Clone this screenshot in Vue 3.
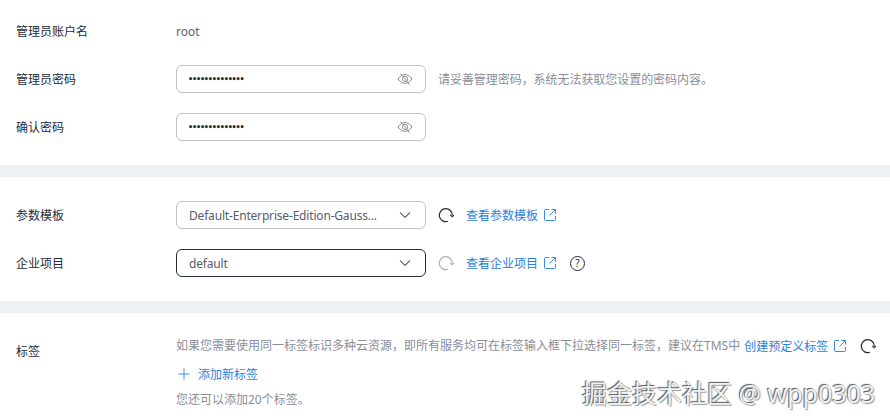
<script setup>
const pw = '•'.repeat(14)
</script>

<template>
  <div class="page">
    <section class="sec first">
      <div class="row">
        <div class="label">管理员账户名</div>
        <div class="val">root</div>
      </div>
      <div class="row">
        <div class="label">管理员密码</div>
        <div class="box">
          <span class="dots">{{ pw }}</span>
          <svg class="eye" width="16" height="16" viewBox="0 0 16 16" fill="none" stroke="#8f9196" stroke-width="1">
            <path d="M1 8c1.8-3 4.2-4.300 7-4.300S13.200 5 15 8c-1.800 3-4.200 4.300-7 4.300S2.800 11 1 8z" />
            <circle cx="8" cy="8" r="2.600" />
            <path d="M3.500 2.500l9 11" />
          </svg>
        </div>
        <div class="hint">请妥善管理密码，系统无法获取您设置的密码内容。</div>
      </div>
      <div class="row">
        <div class="label">确认密码</div>
        <div class="box">
          <span class="dots">{{ pw }}</span>
          <svg class="eye" width="16" height="16" viewBox="0 0 16 16" fill="none" stroke="#8f9196" stroke-width="1">
            <path d="M1 8c1.8-3 4.2-4.300 7-4.300S13.200 5 15 8c-1.800 3-4.200 4.300-7 4.300S2.800 11 1 8z" />
            <circle cx="8" cy="8" r="2.600" />
            <path d="M3.500 2.500l9 11" />
          </svg>
        </div>
      </div>
    </section>

    <section class="sec second">
      <div class="row">
        <div class="label">参数模板</div>
        <div class="box">
          <span class="text">Default-Enterprise-Edition-Gauss...</span>
          <svg class="chev" width="14" height="14" viewBox="0 0 14 14" fill="none" stroke="#6b6b6b" stroke-width="1.100"><path d="M2 4.500l5 5 5-5" /></svg>
        </div>
        <svg class="refresh" width="16" height="16" viewBox="0 0 16 16" fill="none" stroke="#252b3a" stroke-width="1.200">
          <path d="M10 14.300A6.500 6.500 0 1 1 14.300 8.500" />
          <path d="M12.300 7.800l2 2 1.700-2" stroke-width="1.100" />
        </svg>
        <a class="link">查看参数模板</a>
        <svg class="ext" width="14" height="14" viewBox="0 0 14 14" fill="none" stroke="#3f87dc" stroke-width="1"><path d="M6 1.500H2.500a1 1 0 0 0-1 1v9a1 1 0 0 0 1 1h9a1 1 0 0 0 1-1V8M8.500 1.500h4v4M12.500 1.500L6.500 7.500" /></svg>
      </div>
      <div class="row">
        <div class="label">企业项目</div>
        <div class="box active">
          <span class="text">default</span>
          <svg class="chev" width="14" height="14" viewBox="0 0 14 14" fill="none" stroke="#6b6b6b" stroke-width="1.100"><path d="M2 4.500l5 5 5-5" /></svg>
        </div>
        <svg class="refresh" width="16" height="16" viewBox="0 0 16 16" fill="none" stroke="#adb0b8" stroke-width="1.200">
          <path d="M10 14.300A6.500 6.500 0 1 1 14.300 8.500" />
          <path d="M12.300 7.800l2 2 1.700-2" stroke-width="1.100" />
        </svg>
        <a class="link">查看企业项目</a>
        <svg class="ext" width="14" height="14" viewBox="0 0 14 14" fill="none" stroke="#3f87dc" stroke-width="1"><path d="M6 1.500H2.500a1 1 0 0 0-1 1v9a1 1 0 0 0 1 1h9a1 1 0 0 0 1-1V8M8.500 1.500h4v4M12.500 1.500L6.500 7.500" /></svg>
        <span class="help">?</span>
      </div>
    </section>

    <section class="sec third">
      <div class="label tag-label">标签</div>
      <div class="tag-body">
        <div class="tag-line">
          <span class="muted">如果您需要使用同一标签标识多种云资源，即所有服务均可在标签输入框下拉选择同一标签，建议在TMS中</span>
          <a class="link tag-link">创建预定义标签</a>
          <svg class="ext" width="14" height="14" viewBox="0 0 14 14" fill="none" stroke="#3f87dc" stroke-width="1"><path d="M6 1.500H2.500a1 1 0 0 0-1 1v9a1 1 0 0 0 1 1h9a1 1 0 0 0 1-1V8M8.500 1.500h4v4M12.500 1.500L6.500 7.500" /></svg>
          <svg class="refresh tag-refresh" width="16" height="16" viewBox="0 0 16 16" fill="none" stroke="#252b3a" stroke-width="1.200">
            <path d="M10 14.300A6.500 6.500 0 1 1 14.300 8.500" />
            <path d="M12.300 7.800l2 2 1.700-2" stroke-width="1.100" />
          </svg>
        </div>
        <div class="add">
          <svg width="12" height="12" viewBox="0 0 12 12" stroke="#3a8ee0" stroke-width="1"><path d="M6 .5v11M.5 6h11" /></svg>
          <a class="link add-link">添加新标签</a>
        </div>
        <div class="muted">您还可以添加20个标签。</div>
      </div>
    </section>

    <div class="mark">掘金技术社区 @ wpp0303</div>
  </div>
</template>

<style scoped>
.page {
  position: relative;
  width: 890px;
  height: 420px;
  overflow: hidden;
  background: #eff0f2;
  color: #252b3a;
  font-family: "Noto Sans", "Noto Sans CJK SC", sans-serif;
  font-size: 12px;
}
.sec { background: #fff; }
.first { height: 165px; padding-top: 7px; box-sizing: border-box; }
.second { height: 124px; margin-top: 12px; padding-top: 14px; box-sizing: border-box; }
.third { height: 107px; margin-top: 12px; display: flex; }
.first, .second { display: flex; flex-direction: column; }
.row { display: flex; align-items: center; height: 48px; flex: none; }
.label { width: 160px; padding: 2px 0 0 16px; flex: none; line-height: 18px; }
.val { color: #575d6c; }
.box {
  width: 250px;
  height: 28px;
  box-sizing: border-box;
  border: 1px solid #c2c2c2;
  border-radius: 6px;
  display: flex;
  align-items: center;
  padding: 0 12px;
  flex: none;
  background: #fff;
}
.box.active { border-color: #252b3a; }
.dots { flex: 1; font-size: 8px; letter-spacing: -1.15px; text-indent: -1px; color: #252b3a; font-family: "DejaVu Sans", sans-serif; font-weight: bold; }
.text { flex: 1; color: #575d6c; white-space: nowrap; overflow: hidden; letter-spacing: -0.18px; }
.eye { margin-right: 0; }
.chev { margin-right: 1px; }
.hint { margin-left: 12px; color: #8a8e99; white-space: nowrap; letter-spacing: -0.05px; }
.refresh { margin-left: 12px; flex: none; }
.link { color: #2a7fdc; white-space: nowrap; margin-left: 12px; }
.ext { margin-left: 5px; flex: none; }
.help {
  width: 13px;
  height: 13px;
  border: 1px solid #252b3a;
  border-radius: 50%;
  margin-left: 13px;
  font-size: 10px;
  line-height: 13px;
  text-align: center;
  flex: none;
}
.tag-label { padding-top: 30px; }
.tag-body { padding-top: 24px; width: 714px; }
.tag-line { display: flex; align-items: center; height: 18px; white-space: nowrap; }
.muted { color: #8a8e99; line-height: 18px; white-space: nowrap; }
.tag-link { margin-left: 4px; }
.tag-refresh { margin-left: 13px; }
.add { display: flex; align-items: center; height: 18px; margin-top: 10px; margin-bottom: 8px; padding-left: 2px; }
.add-link { margin-left: 8px; }
.mark {
  position: absolute;
  left: 582px;
  top: 376px;
  font-size: 25px;
  line-height: 34px;
  white-space: nowrap;
  color: #f2f2f2;
  text-shadow: -1px -1px 1px #555, 1px 1px 1px #999;
}
</style>
